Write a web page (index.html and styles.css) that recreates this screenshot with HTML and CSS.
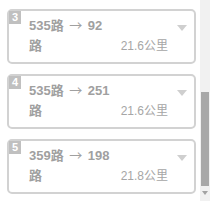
FILE: index.html
```html
<!DOCTYPE html>
<html>
<head>
<meta charset="utf-8">
<link rel="stylesheet" href="styles.css">
</head>
<body>
<div class="page">
  <div class="list">
    <div class="card">
      <span class="badge">3</span>
      <div class="title">535路<span class="arrow">→</span>92<br>路</div>
      <div class="dist">21.6公里</div>
      <span class="caret"></span>
    </div>
    <div class="card">
      <span class="badge">4</span>
      <div class="title">535路<span class="arrow">→</span>251<br>路</div>
      <div class="dist">21.6公里</div>
      <span class="caret"></span>
    </div>
    <div class="card">
      <span class="badge">5</span>
      <div class="title">359路<span class="arrow">→</span>198<br>路</div>
      <div class="dist">21.8公里</div>
      <span class="caret"></span>
    </div>
  </div>
  <div class="scrollbar">
    <div class="thumb"></div>
    <div class="down"></div>
  </div>
</div>
</body>
</html>
```
FILE: styles.css
```css
html, body {
  margin: 0;
  padding: 0;
  background: #fff;
  overflow: hidden;
}
.page {
  display: flex;
  width: 210px;
  height: 201px;
  font-family: "Liberation Sans", Arial, "Noto Sans CJK SC", sans-serif;
}
.list {
  width: 200px;
  padding: 9px 0 0 7px;
  box-sizing: border-box;
  display: flex;
  flex-direction: column;
  gap: 10px;
}
.card {
  position: relative;
  width: 189px;
  height: 55px;
  box-sizing: border-box;
  border: 2px solid #d2d2d2;
  border-radius: 5px;
  padding: 5px 7px 0 20px;
  display: flex;
  align-items: flex-start;
}
.badge {
  position: absolute;
  left: 0;
  top: 0;
  width: 12px;
  height: 13px;
  background: #c0c0c0;
  color: #fff;
  font-weight: bold;
  font-size: 11px;
  line-height: 13px;
  text-align: center;
}
.title {
  font-size: 13px;
  font-weight: bold;
  line-height: 20px;
  color: #a0a0a0;
  white-space: nowrap;
}
.arrow {
  display: inline-block;
  width: 24px;
  text-align: center;
  font-family: "Noto Sans CJK SC", sans-serif;
  font-weight: normal;
  font-size: 13px;
  line-height: 13px;
}
.dist {
  margin-left: auto;
  margin-top: 20px;
  margin-right: 9px;
  font-size: 12px;
  line-height: 20px;
  color: #a6a6a6;
}
.caret {
  margin-top: 9px;
  width: 0;
  height: 0;
  border-left: 5px solid transparent;
  border-right: 5px solid transparent;
  border-top: 6px solid #cfcfcf;
}
.scrollbar {
  width: 10px;
  height: 201px;
  background: #f1f1f1;
  display: flex;
  flex-direction: column;
  align-items: center;
}
.thumb {
  width: 8px;
  height: 94px;
  margin-top: 92px;
  background: #a8a8a8;
}
.down {
  margin-top: 5px;
  width: 0;
  height: 0;
  border-left: 3px solid transparent;
  border-right: 3px solid transparent;
  border-top: 4px solid #a3a3a3;
}
```
